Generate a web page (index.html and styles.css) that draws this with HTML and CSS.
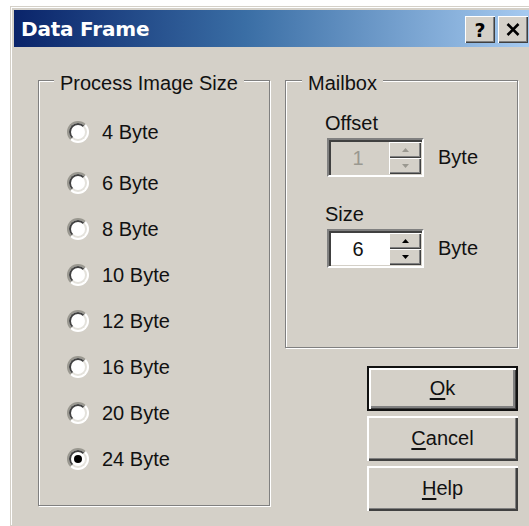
FILE: index.html
```html
<!DOCTYPE html>
<html>
<head>
<meta charset="utf-8">
<title>Data Frame</title>
<link rel="stylesheet" href="styles.css">
</head>
<body>
<div class="window">
  <div class="titlebar">
    <span class="title">Data Frame</span>
    <button class="caption-btn help-btn">?</button>
    <button class="caption-btn close-btn">
      <svg width="14" height="13" viewBox="0 0 14 13"><path d="M1.5 1 L12.5 12 M12.5 1 L1.5 12" stroke="#000" stroke-width="2.6"/></svg>
    </button>
  </div>
  <div class="client">
    <div class="group group-size">
      <span class="group-title">Process Image Size</span>
      <div class="radio-list">
        <label class="radio-row first"><span class="radio"></span>4 Byte</label>
        <label class="radio-row"><span class="radio"></span>6 Byte</label>
        <label class="radio-row"><span class="radio"></span>8 Byte</label>
        <label class="radio-row"><span class="radio"></span>10 Byte</label>
        <label class="radio-row"><span class="radio"></span>12 Byte</label>
        <label class="radio-row"><span class="radio"></span>16 Byte</label>
        <label class="radio-row"><span class="radio"></span>20 Byte</label>
        <label class="radio-row"><span class="radio checked"></span>24 Byte</label>
      </div>
    </div>
    <div class="right-col">
      <div class="group group-mailbox">
        <span class="group-title">Mailbox</span>
        <div class="field field-offset">
          <span class="field-label">Offset</span>
          <div class="spin-row">
            <div class="spin disabled">
              <span class="spin-value">1</span>
              <div class="spin-buttons">
                <span class="spin-btn"><svg width="7" height="4" viewBox="0 0 7 4"><polygon points="3.5,0 7,4 0,4"/></svg></span>
                <span class="spin-btn"><svg width="7" height="4" viewBox="0 0 7 4"><polygon points="0,0 7,0 3.5,4"/></svg></span>
              </div>
            </div>
            <span class="unit">Byte</span>
          </div>
        </div>
        <div class="field field-size">
          <span class="field-label">Size</span>
          <div class="spin-row">
            <div class="spin">
              <span class="spin-value">6</span>
              <div class="spin-buttons">
                <span class="spin-btn"><svg width="7" height="4" viewBox="0 0 7 4"><polygon points="3.5,0 7,4 0,4"/></svg></span>
                <span class="spin-btn"><svg width="7" height="4" viewBox="0 0 7 4"><polygon points="0,0 7,0 3.5,4"/></svg></span>
              </div>
            </div>
            <span class="unit">Byte</span>
          </div>
        </div>
      </div>
      <div class="actions">
        <button class="btn default"><u>O</u>k</button>
        <button class="btn"><u>C</u>ancel</button>
        <button class="btn"><u>H</u>elp</button>
      </div>
    </div>
  </div>
</div>
</body>
</html>
```
FILE: styles.css
```css
html, body {
  margin: 0;
  padding: 0;
  background: #fff;
  overflow: hidden;
}

body {
  font-family: "Liberation Sans", Arial, sans-serif;
  font-size: 20px;
  color: #111;
}

/* dialog frame (runs on past the right and bottom of the view) */
.window {
  margin: 6px 0 0 10px;
  width: 515px;
  height: 512px;
  padding: 3px 0 3px 3px;
  background: #d4d0c8;
  border: 1px solid #d4d0c8;
  border-right: none;
  box-shadow: inset 1px 1px #fff;
}

.titlebar {
  height: 37px;
  display: flex;
  align-items: center;
  padding: 0 1px 0 7px;
  background: linear-gradient(90deg, #0a246a 0%, #3a6ea5 45%, #a6caf0 100%);
}

.title {
  flex: 1;
  font-family: "DejaVu Sans", sans-serif;
  font-weight: bold;
  font-size: 20px;
  color: #fff;
  letter-spacing: -0.2px;
}

.caption-btn {
  width: 30px;
  height: 27px;
  margin: 2px 0 0 3px;
  padding: 0;
  border: none;
  background: #d4d0c8;
  box-shadow: inset 1px 1px #fff, inset -1px -1px #404040, inset -2px -2px #808080;
  display: flex;
  align-items: center;
  justify-content: center;
  font-family: "DejaVu Sans", sans-serif;
  font-weight: bold;
  font-size: 19px;
  color: #000;
}

/* client area */
.client {
  display: flex;
  gap: 15px;
  padding: 33px 0 0 24px;
}

.group {
  border: 1px solid #808080;
  box-shadow: inset 1px 1px #fff, 1px 1px #fff;
  display: flex;
  flex-direction: column;
  align-items: flex-start;
  box-sizing: border-box;
}

.group-title {
  margin: -9px 0 0 15px;
  padding: 0 6px;
  line-height: 22px;
  background: #d4d0c8;
}

.group-size {
  width: 232px;
  height: 426px;
}

.radio-list {
  display: flex;
  flex-direction: column;
  padding: 15px 0 0 28px;
}

.radio-row {
  height: 46px;
  display: flex;
  align-items: center;
  gap: 13px;
}

.radio-row.first {
  margin-bottom: 5px;
}

.radio {
  width: 22px;
  height: 22px;
  box-sizing: border-box;
  border-radius: 50%;
  border: 2px solid;
  border-color: #9a9890 #fff #fff #9a9890;
  background: #fff;
  position: relative;
  display: grid;
  place-items: center;
}

.radio::before {
  content: "";
  position: absolute;
  inset: 0;
  border-radius: 50%;
  border: 2px solid;
  border-color: #404040 #e4e2dc #e4e2dc #404040;
}

.radio.checked::after {
  content: "";
  width: 8px;
  height: 8px;
  border-radius: 50%;
  background: #000;
}

.right-col {
  display: flex;
  flex-direction: column;
  align-items: flex-end;
  width: 233px;
}

.group-mailbox {
  width: 233px;
  height: 268px;
}

.group-mailbox .group-title {
  margin-left: 16px;
}

.field {
  display: flex;
  flex-direction: column;
  align-items: flex-start;
}

.field-offset {
  margin-top: 18px;
}

.field-size {
  margin-top: 26px;
}

.field-label {
  line-height: 22px;
  margin: 0 0 4px 39px;
}

.spin-row {
  display: flex;
  align-items: center;
  gap: 14px;
  padding-left: 41px;
}

.spin {
  width: 97px;
  height: 39px;
  box-sizing: border-box;
  border: 2px solid;
  border-color: #808080 #fff #fff #808080;
  box-shadow: inset 2px 2px #404040, inset -1px -1px #d4d0c8;
  background: #fff;
  display: flex;
}

.spin-value {
  flex: 1;
  display: flex;
  align-items: center;
  justify-content: center;
  padding: 2px 2px 0 0;
}

.spin.disabled {
  background: #d4d0c8;
}

.spin.disabled .spin-value {
  color: #9a9890;
}

.spin-buttons {
  width: 32px;
  display: flex;
  flex-direction: column;
  padding: 2px 1px 1px 0;
}

.spin-btn {
  flex: 1;
  background: #d4d0c8;
  box-shadow: inset 1px 1px #fff, inset -1px -1px #404040, inset -2px -2px #808080;
  display: flex;
  align-items: center;
  justify-content: center;
}

.spin-btn svg {
  fill: #000;
}

.spin.disabled .spin-btn svg {
  fill: #9a9890;
}

/* command buttons */
.actions {
  display: flex;
  flex-direction: column;
  gap: 5px;
  margin-top: 18px;
}

.btn {
  width: 151px;
  height: 45px;
  box-sizing: border-box;
  padding: 0;
  border: none;
  background: #d4d0c8;
  box-shadow: inset 2px 2px #fff, inset -2px -2px #404040, inset -3px -3px #808080;
  font-family: "Liberation Sans", Arial, sans-serif;
  font-size: 20px;
  color: #111;
}

.btn.default {
  border: 2px solid #111;
  box-shadow: inset 2px 2px #fff, inset -1px -1px #404040, inset -3px -3px #808080;
}

.btn u {
  text-decoration-thickness: 2px;
  text-underline-offset: 3px;
}
```
